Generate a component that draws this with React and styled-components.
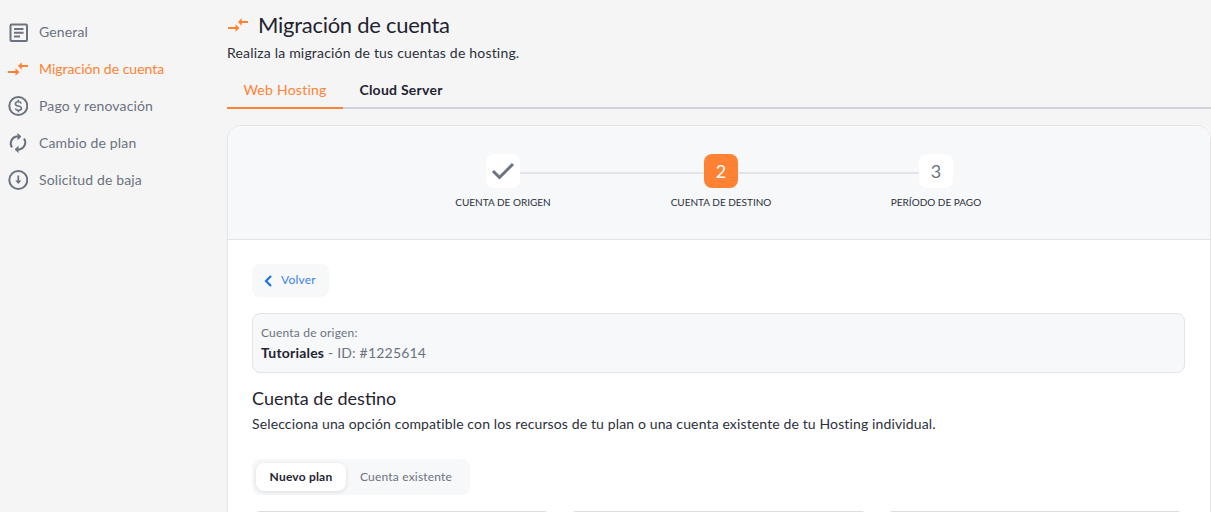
import React from 'react'
import styled, { createGlobalStyle } from 'styled-components'

const GlobalStyle = createGlobalStyle`
  html, body {
    margin: 0;
    height: 512px;
    overflow: hidden;
    background: #f5f5f5;
    font-family: "Lato", "Noto Sans", sans-serif;
  }
  * { box-sizing: border-box; }
`

const Page = styled.div`
  display: flex;
  width: 1211px;
  height: 512px;
  overflow: hidden;
`

const Sidebar = styled.nav`
  width: 227px;
  flex: none;
  padding-top: 13px;
  display: flex;
  flex-direction: column;
`

const NavItem = styled.div`
  display: flex;
  align-items: center;
  gap: 11px;
  height: 37px;
  padding-left: 8px;
  font-size: 14px;
  letter-spacing: ${(p) => (p.$active ? '0' : '0.15px')};
  color: ${(p) => (p.$active ? '#ff8133' : '#6b7280')};

  svg { flex: none; }
`

const Main = styled.main`
  flex: 1;
  min-width: 0;
`

const TitleRow = styled.div`
  display: flex;
  align-items: center;
  gap: 10px;
  padding-top: 10px;
  height: 40px;
`

const Title = styled.h1`
  margin: 0;
  font-size: 22px;
  font-weight: 400;
  line-height: 28px;
  color: #1f2430;
  letter-spacing: -0.27px;
`

const Subtitle = styled.p`
  margin: 4px 0 0;
  font-size: 14px;
  line-height: 18px;
  color: #2b303b;
  letter-spacing: 0.19px;
`

const Tabs = styled.div`
  display: flex;
  margin-top: 11px;
  height: 36px;
  border-bottom: 2px solid #cfd2d6;
`

const Tab = styled.div`
  width: ${(p) => p.$width}px;
  height: 36px;
  display: flex;
  align-items: center;
  justify-content: center;
  padding-bottom: 2px;
  font-size: 14px;
  font-weight: ${(p) => (p.$active ? 400 : 700)};
  letter-spacing: 0.25px;
  color: ${(p) => (p.$active ? '#ff8133' : '#1f2430')};
  border-bottom: 2px solid ${(p) => (p.$active ? '#ff8133' : 'transparent')};
`

const Panel = styled.section`
  margin-top: 16px;
  height: 420px;
  background: #fff;
  border: 1px solid #e2e4e8;
  border-radius: 14px 14px 0 0;
  overflow: hidden;
`

const StepsHeader = styled.div`
  height: 114px;
  background: #f7f8fa;
  border-bottom: 1px solid #e2e4e8;
  padding: 28px 0 0 258px;
`

const Steps = styled.div`
  display: flex;
`

const Step = styled.div`
  width: 34px;
  flex: none;
  display: flex;
  flex-direction: column;
  align-items: center;
`

const StepBadge = styled.div`
  width: 34px;
  height: 34px;
  border-radius: 8px;
  display: flex;
  align-items: center;
  justify-content: center;
  font-size: 18px;
  background: ${(p) => (p.$current ? '#ff8133' : '#fff')};
  color: ${(p) => (p.$current ? '#fff' : '#6b7280')};
`

const StepLabel = styled.div`
  margin-top: 7px;
  font-size: 10px;
  line-height: 14px;
  white-space: nowrap;
  color: #2b303b;
`

const StepLine = styled.div`
  width: ${(p) => p.$width}px;
  flex: none;
  height: 2px;
  margin-top: 18px;
  background: #e2e4ea;
`

const Body = styled.div`
  padding: 24px 24px 0;
`

const BackButton = styled.button`
  display: flex;
  align-items: center;
  gap: 8px;
  width: 77px;
  height: 33px;
  padding: 0 0 2px 12px;
  border: none;
  border-radius: 8px;
  background: #f7f8fa;
  color: #3b82f6;
  font-family: inherit;
  font-size: 12px;
  letter-spacing: 0.2px;

  svg { margin-top: 2px; }
`

const OriginBox = styled.div`
  margin-top: 16px;
  width: 933px;
  height: 60px;
  padding: 10px 8px 0;
  background: #f7f8fa;
  border: 1px solid #e2e4e8;
  border-radius: 8px;
`

const OriginLabel = styled.div`
  font-size: 12px;
  line-height: 18px;
  letter-spacing: 0.2px;
  color: #6b7280;
`

const OriginValue = styled.div`
  margin-top: 2px;
  font-size: 14px;
  line-height: 18px;
  letter-spacing: 0.2px;
  color: #6b7280;

  strong {
    font-weight: 700;
    color: #1f2430;
  }
`

const SectionTitle = styled.h2`
  margin: 14px 0 0;
  font-size: 18px;
  font-weight: 400;
  line-height: 22px;
  letter-spacing: 0;
  color: #1f2430;
`

const SectionText = styled.p`
  margin: 6px 0 0;
  font-size: 14px;
  line-height: 18px;
  letter-spacing: 0.13px;
  color: #2b303b;
`

const Toggle = styled.div`
  display: flex;
  align-items: center;
  margin-top: 26px;
  width: 218px;
  height: 36px;
  padding: 0 4px;
  background: #f7f8fa;
  border-radius: 8px;
`

const ToggleOption = styled.div`
  width: ${(p) => p.$width}px;
  height: 28px;
  padding-bottom: 2px;
  display: flex;
  align-items: center;
  justify-content: center;
  border-radius: 8px;
  font-size: 12px;
  font-weight: ${(p) => (p.$active ? 700 : 400)};
  letter-spacing: 0.2px;
  color: ${(p) => (p.$active ? '#1f2430' : '#6b7280')};
  background: ${(p) => (p.$active ? '#fff' : 'transparent')};
  box-shadow: ${(p) => (p.$active ? '0 1px 4px rgba(0, 0, 0, 0.12)' : 'none')};
`

const Cards = styled.div`
  display: flex;
  gap: 16px;
  width: 933px;
  margin-top: 16px;
`

const Card = styled.div`
  flex: 1;
  height: 120px;
  border-radius: 8px;
  background: #fff;
  border: 1px solid #dcdcdc;
`

const TitleIcon = styled.span`
  display: flex;
  margin-left: 1px;
`

const MigrateIcon = ({ color = '#ff8133' }) => (
  <svg width="20" height="14" viewBox="0 0 20 14" fill={color} stroke="none">
    <path d="M0 9h7.500V6.300L11.500 10l-4 3.700V11H0z" />
    <path d="M20 3h-6.300V.3L10 4l3.700 3.700V5H20z" />
  </svg>
)

const GeneralIcon = () => (
  <svg width="20" height="20" viewBox="0 0 20 20" fill="none" stroke="#6b7280" strokeWidth="2">
    <rect x="2.500" y="2.500" width="16.500" height="16.500" rx="1" />
    <path d="M6 7h9.500M6 10.800h9.500M6 14.500h6" />
  </svg>
)

const DollarIcon = () => (
  <svg width="20" height="20" viewBox="0 0 20 20" fill="none" stroke="#6b7280" strokeWidth="2">
    <circle cx="10.300" cy="10" r="9" />
    <path d="M13.300 7.500c-.4-1.100-1.500-1.800-3-1.800-1.700 0-2.900 1-2.900 2.200 0 2.900 6 1.400 6 4.300 0 1.200-1.300 2.200-3 2.200-1.500 0-2.700-.7-3.100-1.800M10.300 3.800v2M10.300 14.300v2" strokeWidth="1.600" />
  </svg>
)

const RefreshIcon = () => (
  <svg width="20" height="20" viewBox="0 0 20 20" fill="none" stroke="#6b7280" strokeWidth="2">
    <path d="M4 14.500A7 7 0 0 1 8.500 3.600H12" />
    <path d="M9.500 0.500L13 3.600 9.500 6.700" fill="#6b7280" strokeWidth="1" />
    <path d="M16 5.500A7 7 0 0 1 11.500 16.400H8" />
    <path d="M10.500 13.300L7 16.400l3.500 3.100" fill="#6b7280" strokeWidth="1" />
  </svg>
)

const DownIcon = () => (
  <svg width="20" height="20" viewBox="0 0 20 20" fill="none" stroke="#6b7280" strokeWidth="2">
    <circle cx="10.300" cy="10" r="9" />
    <path d="M10.300 5.500v6" strokeWidth="1.800" />
    <path d="M7.300 10.500h6l-3 3.500z" fill="#6b7280" stroke="none" />
  </svg>
)

const CheckIcon = () => (
  <svg width="24" height="20" viewBox="0 0 24 20" fill="none" stroke="#6b7280" strokeWidth="3">
    <path d="M2 10l6.500 6.500L22 3" />
  </svg>
)

const ChevronIcon = () => (
  <svg width="9" height="12" viewBox="0 0 9 12" fill="none" stroke="#1a73e8" strokeWidth="2.200">
    <path d="M7 1L2 6l5 5" />
  </svg>
)

export default function App() {
  return (
    <>
      <GlobalStyle />
      <Page>
        <Sidebar>
          <NavItem><GeneralIcon />General</NavItem>
          <NavItem $active><MigrateIcon />Migración de cuenta</NavItem>
          <NavItem><DollarIcon />Pago y renovación</NavItem>
          <NavItem><RefreshIcon />Cambio de plan</NavItem>
          <NavItem><DownIcon />Solicitud de baja</NavItem>
        </Sidebar>
        <Main>
          <TitleRow>
            <TitleIcon><MigrateIcon /></TitleIcon>
            <Title>Migración de cuenta</Title>
          </TitleRow>
          <Subtitle>Realiza la migración de tus cuentas de hosting.</Subtitle>
          <Tabs>
            <Tab $active $width={116}>Web Hosting</Tab>
            <Tab $width={116}>Cloud Server</Tab>
          </Tabs>
          <Panel>
            <StepsHeader>
              <Steps>
                <Step>
                  <StepBadge><CheckIcon /></StepBadge>
                  <StepLabel>CUENTA DE ORIGEN</StepLabel>
                </Step>
                <StepLine $width={184} />
                <Step>
                  <StepBadge $current>2</StepBadge>
                  <StepLabel>CUENTA DE DESTINO</StepLabel>
                </Step>
                <StepLine $width={181} />
                <Step>
                  <StepBadge>3</StepBadge>
                  <StepLabel>PERÍODO DE PAGO</StepLabel>
                </Step>
              </Steps>
            </StepsHeader>
            <Body>
              <BackButton><ChevronIcon />Volver</BackButton>
              <OriginBox>
                <OriginLabel>Cuenta de origen:</OriginLabel>
                <OriginValue><strong>Tutoriales</strong> - ID: #1225614</OriginValue>
              </OriginBox>
              <SectionTitle>Cuenta de destino</SectionTitle>
              <SectionText>Selecciona una opción compatible con los recursos de tu plan o una cuenta existente de tu Hosting individual.</SectionText>
              <Toggle>
                <ToggleOption $active $width={90}>Nuevo plan</ToggleOption>
                <ToggleOption $width={120}>Cuenta existente</ToggleOption>
              </Toggle>
              <Cards>
                <Card />
                <Card />
                <Card />
              </Cards>
            </Body>
          </Panel>
        </Main>
      </Page>
    </>
  )
}
